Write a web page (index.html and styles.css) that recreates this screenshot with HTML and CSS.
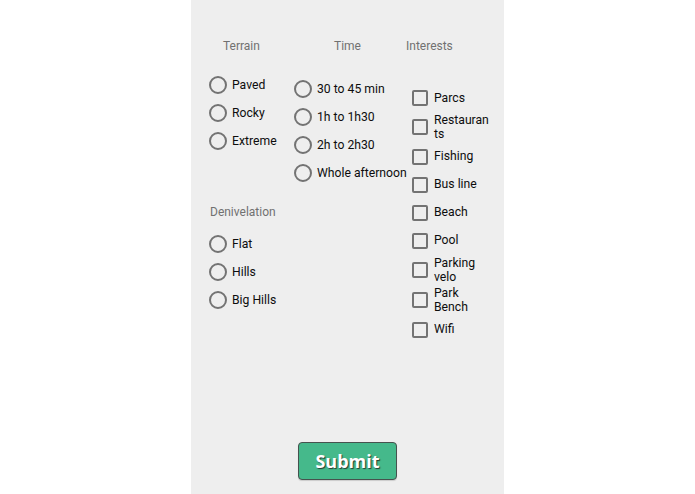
FILE: index.html
```html
<!DOCTYPE html>
<html>
<head>
<meta charset="utf-8">
<link rel="stylesheet" href="styles.css">
</head>
<body>
<div class="panel">
  <div class="columns">
    <div class="col col1">
      <div class="head head-terrain">Terrain</div>
      <div class="list list-terrain">
        <div class="row"><span class="radio"></span><span class="label">Paved</span></div>
        <div class="row"><span class="radio"></span><span class="label">Rocky</span></div>
        <div class="row"><span class="radio"></span><span class="label">Extreme</span></div>
      </div>
      <div class="head head-deniv">Denivelation</div>
      <div class="list list-deniv">
        <div class="row"><span class="radio"></span><span class="label">Flat</span></div>
        <div class="row"><span class="radio"></span><span class="label">Hills</span></div>
        <div class="row"><span class="radio"></span><span class="label">Big Hills</span></div>
      </div>
    </div>
    <div class="col col2">
      <div class="head head-time">Time</div>
      <div class="list list-time">
        <div class="row"><span class="radio"></span><span class="label">30 to 45 min</span></div>
        <div class="row"><span class="radio"></span><span class="label">1h to 1h30</span></div>
        <div class="row"><span class="radio"></span><span class="label">2h to 2h30</span></div>
        <div class="row"><span class="radio"></span><span class="label nowrap">Whole afternoon</span></div>
      </div>
    </div>
    <div class="col col3">
      <div class="head head-interests">Interests</div>
      <div class="list list-interests">
        <div class="row"><span class="check"></span><span class="label clabel">Parcs</span></div>
        <div class="row"><span class="check"></span><span class="label clabel">Restaurants</span></div>
        <div class="row"><span class="check"></span><span class="label clabel">Fishing</span></div>
        <div class="row"><span class="check"></span><span class="label clabel">Bus line</span></div>
        <div class="row"><span class="check"></span><span class="label clabel">Beach</span></div>
        <div class="row"><span class="check"></span><span class="label clabel">Pool</span></div>
        <div class="row"><span class="check"></span><span class="label clabel">Parking velo</span></div>
        <div class="row"><span class="check"></span><span class="label clabel">Park Bench</span></div>
        <div class="row"><span class="check"></span><span class="label clabel">Wifi</span></div>
      </div>
    </div>
  </div>
  <div class="actions">
    <button class="submit">Submit</button>
  </div>
</div>
</body>
</html>
```

FILE: styles.css
```css
html, body {
  margin: 0;
  padding: 0;
  background: #ffffff;
  height: 100%;
}
body {
  font-family: Roboto, "Liberation Sans", sans-serif;
}
.panel {
  width: 313px;
  height: 494px;
  margin: 0 auto;
  background: #eeeeee;
  box-sizing: border-box;
  padding-top: 36px;
  display: flex;
  flex-direction: column;
}
.columns {
  display: flex;
  flex: 1;
}
.col {
  display: flex;
  flex-direction: column;
}
.col1 {
  margin-left: 18px;
  width: 85px;
}
.col2 {
  width: 112px;
}
.col3 {
  flex: 1;
}
.head {
  font-size: 12px;
  line-height: 20px;
  height: 20px;
  color: #717171;
  white-space: nowrap;
}
.head-terrain { padding-left: 14px; }
.head-time { padding-left: 40px; }
.head-interests { padding-left: 0; }
.head-deniv { margin-top: 47px; padding-left: 1px; }
.list { display: flex; flex-direction: column; }
.list-terrain { margin-top: 15px; }
.list-time { margin-top: 19px; }
.list-interests { margin-top: 28px; padding-left: 6px; }
.list-deniv { margin-top: 8px; }
.row {
  display: flex;
  align-items: center;
  min-height: 28px;
}
.radio {
  width: 14px;
  height: 14px;
  border: 2px solid #737373;
  border-radius: 50%;
  flex: none;
  margin-right: 5px;
}
.check {
  width: 12px;
  height: 12px;
  border: 2px solid #737373;
  border-radius: 2px;
  flex: none;
  margin-right: 6px;
}
.label {
  font-size: 12.2px;
  line-height: 14px;
  color: #0d0d0d;
}
.nowrap { white-space: nowrap; }
.clabel {
  width: 56px;
  overflow-wrap: anywhere;
  padding: 1px 0 1.5px;
}
.actions {
  display: flex;
  justify-content: center;
  padding-bottom: 14px;
}
.submit {
  width: 99px;
  height: 38px;
  background: #45b98b;
  border: 1px solid #46524e;
  border-radius: 4px;
  color: #ffffff;
  font-family: "Open Sans", "Liberation Sans", sans-serif;
  font-weight: bold;
  font-size: 18px;
  text-shadow: 1px 1px 1px #243c32;
  padding: 0;
  box-shadow: 0 1px 1px rgba(0,0,0,0.15);
}
```
